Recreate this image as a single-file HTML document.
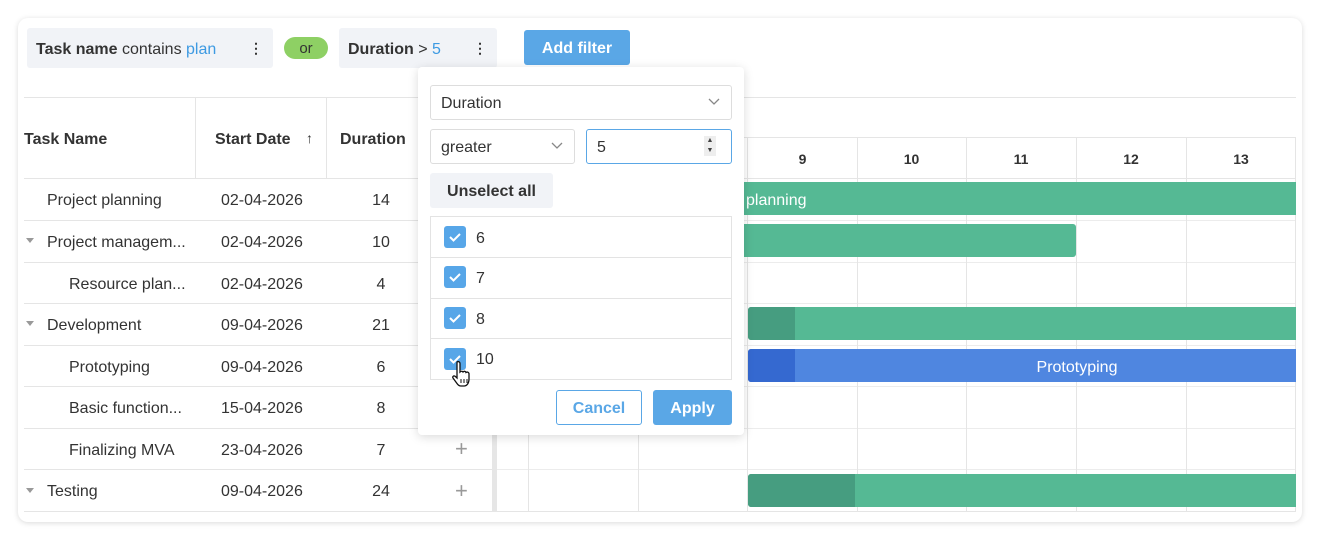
<!DOCTYPE html>
<html><head><style>
*{box-sizing:border-box;margin:0;padding:0}
body{width:1320px;height:542px;background:#fff;font-family:"Liberation Sans",sans-serif;color:#333;position:relative;overflow:hidden;font-size:15px}
.a{position:absolute}
.card{left:18px;top:18px;width:1284px;height:504px;border-radius:10px;box-shadow:0 1px 6px rgba(0,0,0,.15);background:#fff}
.chip{background:#f1f3f7;border-radius:3px;height:40px;top:28px;line-height:40px;padding-left:9px;font-size:16px;padding-top:2px}
.dots{position:absolute;top:0;font-weight:bold;font-size:14px;letter-spacing:0}
.hl{left:24px;height:1px;background:#e5e5e5}
.vl{width:1px;background:#e5e5e5}
.cell{font-size:16px;line-height:42px;height:42px;color:#333;padding-top:2px}
.bar{height:33px;border-radius:3px;background:#55b994}
.cb{width:22px;height:22px;border-radius:3px;background:#57a6e8}
.cb svg{position:absolute;left:4px;top:5px}
.plus{color:#999;font-size:22px;font-weight:300}
.sc{top:139px;text-align:center;line-height:40px;font-size:14px;font-weight:bold}
.hd{top:120px;font-weight:bold;line-height:40px;font-size:16px}
</style></head><body>
<div class="a card"></div>
<div class="a chip" style="left:27px;width:246px"><b>Task name</b> contains <span style="color:#3d9ae2">plan</span><span class="dots" style="left:222px">⋮</span></div>
<div class="a" style="left:284px;top:37px;width:44px;height:22px;border-radius:11px;background:#8ed064;text-align:center;line-height:22px;font-size:15px;padding-top:1px">or</div>
<div class="a chip" style="left:339px;width:158px"><b>Duration</b> &gt; <span style="color:#3d9ae2">5</span><span class="dots" style="left:134px">⋮</span></div>
<div class="a" style="left:524px;top:30px;width:106px;height:35px;border-radius:3px;background:#5aa7e6;color:#fff;font-weight:bold;text-align:center;line-height:35px;font-size:16px;padding-top:1px">Add filter</div>
<div class="a hl" style="top:97px;width:1272px"></div>
<div class="a hl" style="top:178px;width:468px"></div>
<div class="a hd" style="left:24px">Task Name</div>
<div class="a hd" style="left:215px">Start Date</div>
<div class="a" style="left:306px;top:118px;line-height:40px;font-size:14px">↑</div>
<div class="a hd" style="left:340px">Duration</div>
<div class="a vl" style="left:195px;top:98px;height:80px"></div>
<div class="a vl" style="left:326px;top:98px;height:80px"></div>
<div class="a hl" style="top:220px;width:468px"></div>
<div class="a hl" style="top:262px;width:468px"></div>
<div class="a hl" style="top:303px;width:468px"></div>
<div class="a hl" style="top:345px;width:468px"></div>
<div class="a hl" style="top:386px;width:468px"></div>
<div class="a hl" style="top:428px;width:468px"></div>
<div class="a hl" style="top:469px;width:468px"></div>
<div class="a hl" style="top:511px;width:468px"></div>
<div class="a cell" style="left:47px;top:178px">Project planning</div>
<div class="a cell" style="left:47px;top:220px">Project managem...</div>
<div class="a cell" style="left:69px;top:262px">Resource plan...</div>
<div class="a cell" style="left:47px;top:303px">Development</div>
<div class="a cell" style="left:69px;top:345px">Prototyping</div>
<div class="a cell" style="left:69px;top:386px">Basic function...</div>
<div class="a cell" style="left:69px;top:428px">Finalizing MVA</div>
<div class="a cell" style="left:47px;top:469px">Testing</div>
<div class="a" style="left:26px;top:238px;border:4px solid transparent;border-top:5px solid #999"></div>
<div class="a" style="left:26px;top:321px;border:4px solid transparent;border-top:5px solid #999"></div>
<div class="a" style="left:26px;top:488px;border:4px solid transparent;border-top:5px solid #999"></div>
<div class="a cell" style="left:221px;top:178px">02-04-2026</div>
<div class="a cell" style="left:221px;top:220px">02-04-2026</div>
<div class="a cell" style="left:221px;top:262px">02-04-2026</div>
<div class="a cell" style="left:221px;top:303px">09-04-2026</div>
<div class="a cell" style="left:221px;top:345px">09-04-2026</div>
<div class="a cell" style="left:221px;top:386px">15-04-2026</div>
<div class="a cell" style="left:221px;top:428px">23-04-2026</div>
<div class="a cell" style="left:221px;top:469px">09-04-2026</div>
<div class="a cell" style="left:361px;top:178px;width:40px;text-align:center">14</div>
<div class="a cell" style="left:361px;top:220px;width:40px;text-align:center">10</div>
<div class="a cell" style="left:361px;top:262px;width:40px;text-align:center">4</div>
<div class="a cell" style="left:361px;top:303px;width:40px;text-align:center">21</div>
<div class="a cell" style="left:361px;top:345px;width:40px;text-align:center">6</div>
<div class="a cell" style="left:361px;top:386px;width:40px;text-align:center">8</div>
<div class="a cell" style="left:361px;top:428px;width:40px;text-align:center">7</div>
<div class="a cell" style="left:361px;top:469px;width:40px;text-align:center">24</div>
<div class="a plus" style="left:455px;top:436px">+</div>
<div class="a plus" style="left:455px;top:478px">+</div>
<div class="a" style="left:492px;top:98px;width:5px;height:414px;background:#e6e6e6"></div>
<div class="a" style="left:497px;top:137px;width:799px;height:1px;background:#e5e5e5"></div>
<div class="a" style="left:497px;top:178px;width:799px;height:1px;background:#e5e5e5"></div>
<div class="a" style="left:497px;top:220px;width:799px;height:1px;background:#ececec"></div>
<div class="a" style="left:497px;top:262px;width:799px;height:1px;background:#ececec"></div>
<div class="a" style="left:497px;top:303px;width:799px;height:1px;background:#ececec"></div>
<div class="a" style="left:497px;top:345px;width:799px;height:1px;background:#ececec"></div>
<div class="a" style="left:497px;top:386px;width:799px;height:1px;background:#ececec"></div>
<div class="a" style="left:497px;top:428px;width:799px;height:1px;background:#ececec"></div>
<div class="a" style="left:497px;top:469px;width:799px;height:1px;background:#ececec"></div>
<div class="a" style="left:497px;top:511px;width:799px;height:1px;background:#e5e5e5"></div>
<div class="a vl" style="left:528px;top:137px;height:374px"></div>
<div class="a vl" style="left:638px;top:137px;height:374px"></div>
<div class="a vl" style="left:747px;top:137px;height:374px"></div>
<div class="a vl" style="left:857px;top:137px;height:374px"></div>
<div class="a vl" style="left:966px;top:137px;height:374px"></div>
<div class="a vl" style="left:1076px;top:137px;height:374px"></div>
<div class="a vl" style="left:1186px;top:137px;height:374px"></div>
<div class="a vl" style="left:1295px;top:137px;height:374px"></div>
<div class="a sc" style="left:748px;width:109px">9</div>
<div class="a sc" style="left:857px;width:109px">10</div>
<div class="a sc" style="left:966px;width:110px">11</div>
<div class="a sc" style="left:1076px;width:110px">12</div>
<div class="a sc" style="left:1186px;width:110px">13</div>
<div class="a bar" style="left:600px;top:182px;width:696px;border-radius:3px 0 0 3px;color:#fff;line-height:33px;padding-left:146px;font-size:16px;padding-top:2px">planning</div>
<div class="a bar" style="left:600px;top:224px;width:476px"></div>
<div class="a bar" style="left:748px;top:307px;width:548px;border-radius:3px 0 0 3px;overflow:hidden"><div style="width:47px;height:33px;background:#469d80"></div></div>
<div class="a bar" style="left:748px;top:349px;width:548px;background:#4f86e0;border-radius:3px 0 0 3px;overflow:hidden;color:#fff;font-size:16px"><div style="width:47px;height:33px;background:#3569d0;position:absolute"></div><div style="text-align:center;line-height:33px;padding-left:110px;padding-top:2px">Prototyping</div></div>
<div class="a bar" style="left:748px;top:474px;width:548px;border-radius:3px 0 0 3px;overflow:hidden"><div style="width:107px;height:33px;background:#469d80"></div></div>
<div class="a" style="left:418px;top:67px;width:326px;height:368px;background:#fff;border-radius:4px;box-shadow:0 2px 10px rgba(0,0,0,.15)"></div>
<div class="a" style="left:430px;top:85px;width:302px;height:35px;border:1px solid #ddd;border-radius:3px;line-height:33px;padding-left:10px;font-size:16px;padding-top:1px">Duration<svg class="a" style="left:277px;top:12px" width="12" height="8"><path d="M1 1l5 5 5-5" stroke="#888" fill="none" stroke-width="1.3"/></svg></div>
<div class="a" style="left:430px;top:129px;width:145px;height:35px;border:1px solid #ddd;border-radius:3px;line-height:33px;padding-left:10px;font-size:16px;padding-top:1px">greater<svg class="a" style="left:120px;top:12px" width="12" height="8"><path d="M1 1l5 5 5-5" stroke="#888" fill="none" stroke-width="1.3"/></svg></div>
<div class="a" style="left:586px;top:129px;width:146px;height:35px;border:1px solid #5aa7e6;border-radius:3px;line-height:33px;padding-left:10px;font-size:16px;padding-top:1px">5<div class="a" style="left:117px;top:6px;width:12px;height:20px;background:#eee;font-size:7px;line-height:10px;text-align:center;color:#444">▲<br>▼</div></div>
<div class="a" style="left:430px;top:173px;width:123px;height:35px;background:#f1f3f7;border-radius:3px;font-weight:bold;text-align:center;line-height:35px;font-size:16px;padding-top:1px">Unselect all</div>
<div class="a" style="left:430px;top:216px;width:302px;height:164px;border:1px solid #e3e3e3"></div>
<div class="a" style="left:431px;top:257px;width:300px;height:1px;background:#e3e3e3"></div>
<div class="a" style="left:431px;top:298px;width:300px;height:1px;background:#e3e3e3"></div>
<div class="a" style="left:431px;top:338px;width:300px;height:1px;background:#e3e3e3"></div>
<div class="a cb" style="left:444px;top:226px"><svg width="14" height="12"><path d="M2 6l3.5 3.5L12 3" stroke="#fff" stroke-width="2" fill="none"/></svg></div>
<div class="a cb" style="left:444px;top:266px"><svg width="14" height="12"><path d="M2 6l3.5 3.5L12 3" stroke="#fff" stroke-width="2" fill="none"/></svg></div>
<div class="a cb" style="left:444px;top:307px"><svg width="14" height="12"><path d="M2 6l3.5 3.5L12 3" stroke="#fff" stroke-width="2" fill="none"/></svg></div>
<div class="a cb" style="left:444px;top:348px"><svg width="14" height="12"><path d="M2 6l3.5 3.5L12 3" stroke="#fff" stroke-width="2" fill="none"/></svg></div>
<div class="a" style="left:476px;top:228px;line-height:22px;font-size:16px">6</div>
<div class="a" style="left:476px;top:268px;line-height:22px;font-size:16px">7</div>
<div class="a" style="left:476px;top:309px;line-height:22px;font-size:16px">8</div>
<div class="a" style="left:476px;top:349px;line-height:22px;font-size:16px">10</div>
<svg class="a" style="left:451px;top:360px" width="26" height="30"><path d="M6 2c1.5-1 3 0 3 1.5V12c1-1 2.5-1 3 0 1-1 2.5-1 3 .5 1-.8 2.5-.5 3 1V19c0 4-2 7-5 7h-3c-2 0-3-1-4-2.5L2 18c-.8-1.3.5-2.6 2-1.8L6 18V3.5z" fill="#fff" stroke="#111" stroke-width="1.3"/><path d="M10 19v4M13 19v4M16 19v4" stroke="#111" stroke-width="1"/></svg>
<div class="a" style="left:556px;top:390px;width:86px;height:35px;border:1px solid #5aa7e6;border-radius:3px;color:#5aa7e6;font-weight:bold;text-align:center;line-height:33px;font-size:16px;padding-top:1px">Cancel</div>
<div class="a" style="left:653px;top:390px;width:79px;height:35px;background:#5aa7e6;border-radius:3px;color:#fff;font-weight:bold;text-align:center;line-height:35px;font-size:16px;padding-top:1px">Apply</div>
</body></html>
